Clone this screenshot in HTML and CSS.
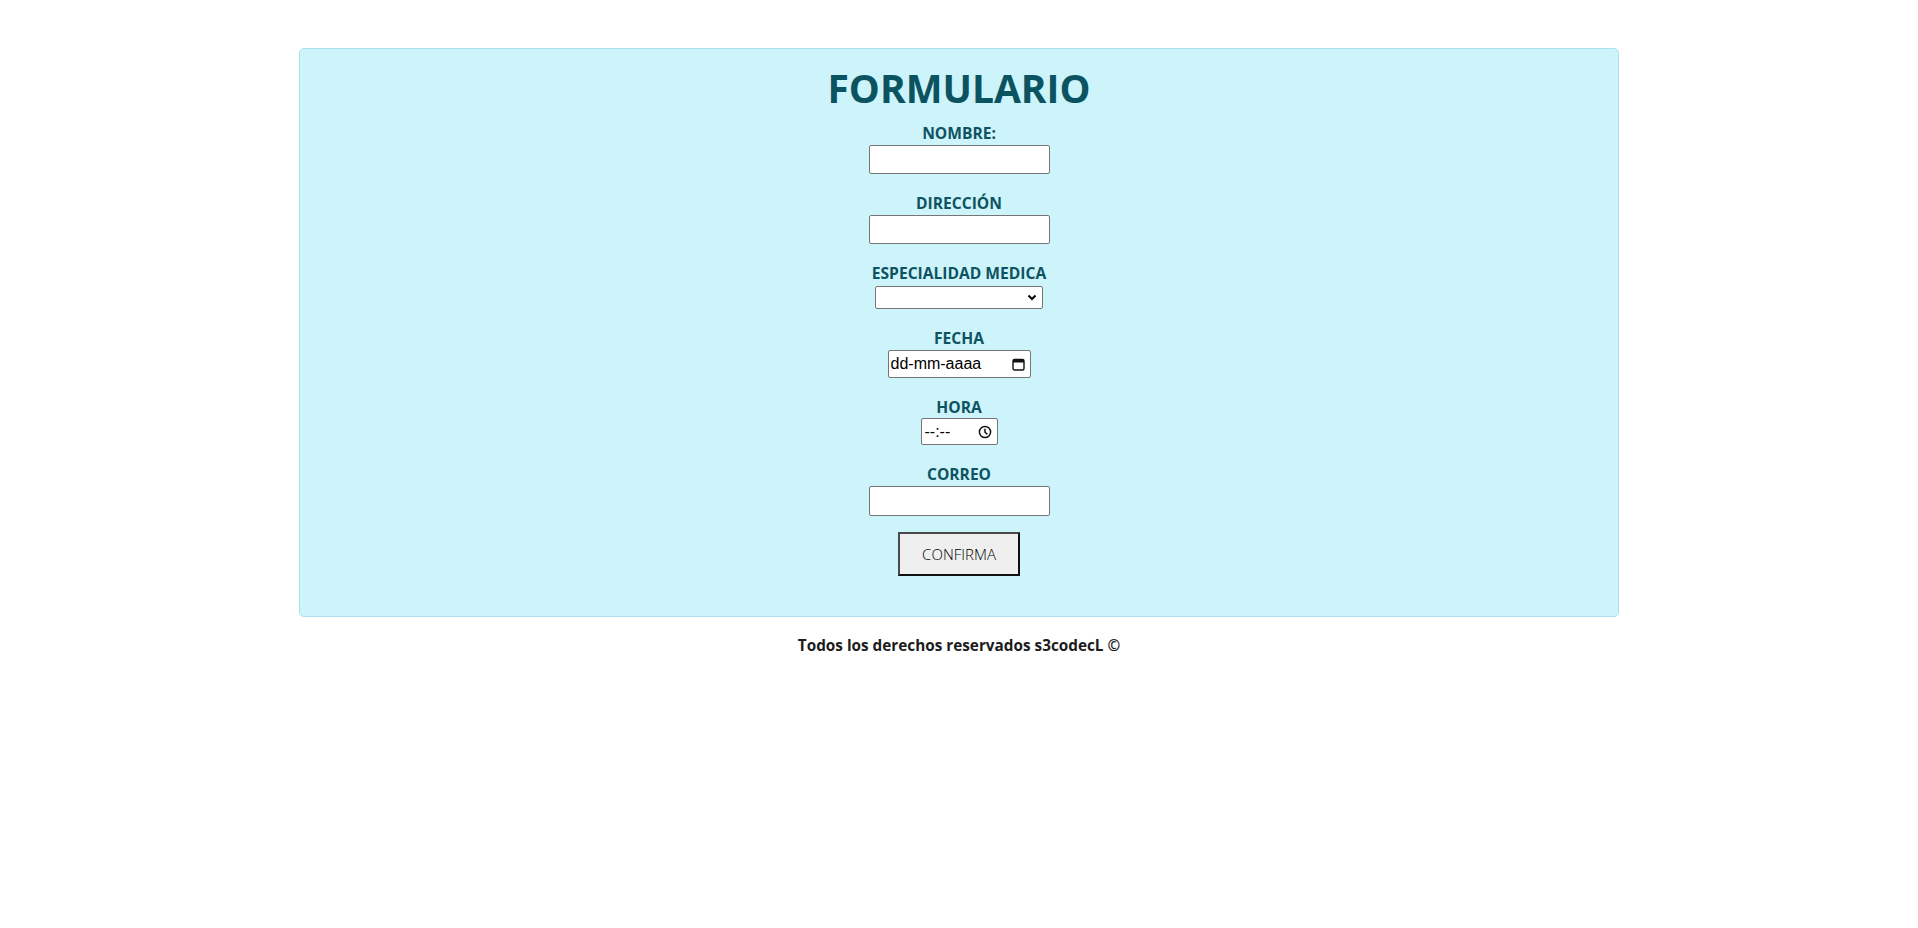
FILE: index.html
```html
<!DOCTYPE html>
<html lang="es">
<head>
<meta charset="utf-8">
<title>Formulario</title>
<link rel="stylesheet" href="styles.css">
</head>
<body>
<div class="page">
  <main class="card">
    <h1 class="title">FORMULARIO</h1>
    <form class="form">
      <div class="field">
        <label class="label" for="nombre">NOMBRE:</label>
        <input class="input" id="nombre" type="text">
      </div>
      <div class="field">
        <label class="label" for="direccion">DIRECCIÓN</label>
        <input class="input" id="direccion" type="text">
      </div>
      <div class="field">
        <label class="label" for="esp">ESPECIALIDAD MEDICA</label>
        <div class="select">
          <svg class="chev" width="10" height="7" viewBox="0 0 10 7"><path d="M1.5 1.5 L5 5 L8.5 1.5" fill="none" stroke="#000" stroke-width="2"/></svg>
        </div>
      </div>
      <div class="field">
        <label class="label">FECHA</label>
        <div class="fake date">
          <span class="ph">dd-mm-aaaa</span>
          <svg width="13" height="13" viewBox="0 0 13 13"><rect x="1" y="1.5" width="11" height="10.5" rx="1.5" fill="none" stroke="#111" stroke-width="1.4"/><rect x="1" y="1.5" width="11" height="3" fill="#111"/></svg>
        </div>
      </div>
      <div class="field">
        <label class="label">HORA</label>
        <div class="fake time">
          <span class="ph">--:--</span>
          <svg width="14" height="14" viewBox="0 0 14 14"><circle cx="7" cy="7" r="5.6" fill="none" stroke="#111" stroke-width="1.5"/><path d="M7 3.8 V7.2 L9.4 9.4" fill="none" stroke="#111" stroke-width="1.5"/></svg>
        </div>
      </div>
      <div class="field">
        <label class="label" for="correo">CORREO</label>
        <input class="input tall" id="correo" type="email">
      </div>
      <button class="btn" type="button">CONFIRMA</button>
    </form>
  </main>
  <footer class="footer">Todos los derechos reservados s3codecL ©</footer>
</div>
</body>
</html>
```

FILE: styles.css
```css
html, body {
  margin: 0;
  padding: 0;
  background: #ffffff;
}

.page {
  display: flex;
  flex-direction: column;
  align-items: center;
  padding-top: 48px;
  font-family: "Open Sans", "Noto Sans", sans-serif;
}

.card {
  box-sizing: border-box;
  width: 1320px;
  background: #cdf3fb;
  border: 1px solid #a9e1ed;
  border-radius: 5px;
  padding: 9px 0 40px;
  display: flex;
  flex-direction: column;
  align-items: center;
}

.title {
  margin: 0 0 5px;
  font-size: 39px;
  line-height: 60px;
  font-weight: 700;
  color: #0b5361;
  letter-spacing: 0;
}

.form {
  display: flex;
  flex-direction: column;
  align-items: center;
}

.field {
  display: flex;
  flex-direction: column;
  align-items: center;
  gap: 2px;
  margin-bottom: 19px;
}

.label {
  font-size: 15.6px;
  line-height: 20px;
  font-weight: 700;
  color: #0d5361;
}

.input {
  box-sizing: border-box;
  width: 181px;
  height: 29px;
  margin: 0;
  border: 1px solid #767676;
  border-radius: 2px;
  background: #ffffff;
  padding: 0 4px;
}

.input.tall {
  height: 30px;
}

.select {
  box-sizing: border-box;
  width: 168px;
  height: 23px;
  margin-top: 1px;
  border: 1px solid #767676;
  border-radius: 2px;
  background: #ffffff;
  display: flex;
  align-items: center;
  justify-content: flex-end;
  padding-right: 5px;
}

.fake {
  box-sizing: border-box;
  border: 1px solid #767676;
  border-radius: 2px;
  background: #ffffff;
  display: flex;
  align-items: center;
  justify-content: space-between;
  padding: 0 5px 0 2px;
  font-family: "Liberation Sans", Arial, sans-serif;
  font-size: 16px;
  color: #000;
}

.date {
  width: 143px;
  height: 28px;
}

.time {
  width: 77px;
  height: 27px;
  margin-top: -1px;
  padding-left: 3px;
}

.btn {
  box-sizing: border-box;
  width: 122px;
  height: 44px;
  margin-top: -3px;
  background: #efefef;
  border: 2px solid;
  border-color: #4a4a4a #111111 #111111 #4a4a4a;
  font-family: "Open Sans", "Noto Sans", sans-serif;
  font-weight: 300;
  font-size: 15px;
  color: #000000;
  padding: 0;
}

.footer {
  margin-top: 17px;
  font-size: 15.3px;
  line-height: 22px;
  font-weight: 700;
  color: #1c1c1c;
}
```
